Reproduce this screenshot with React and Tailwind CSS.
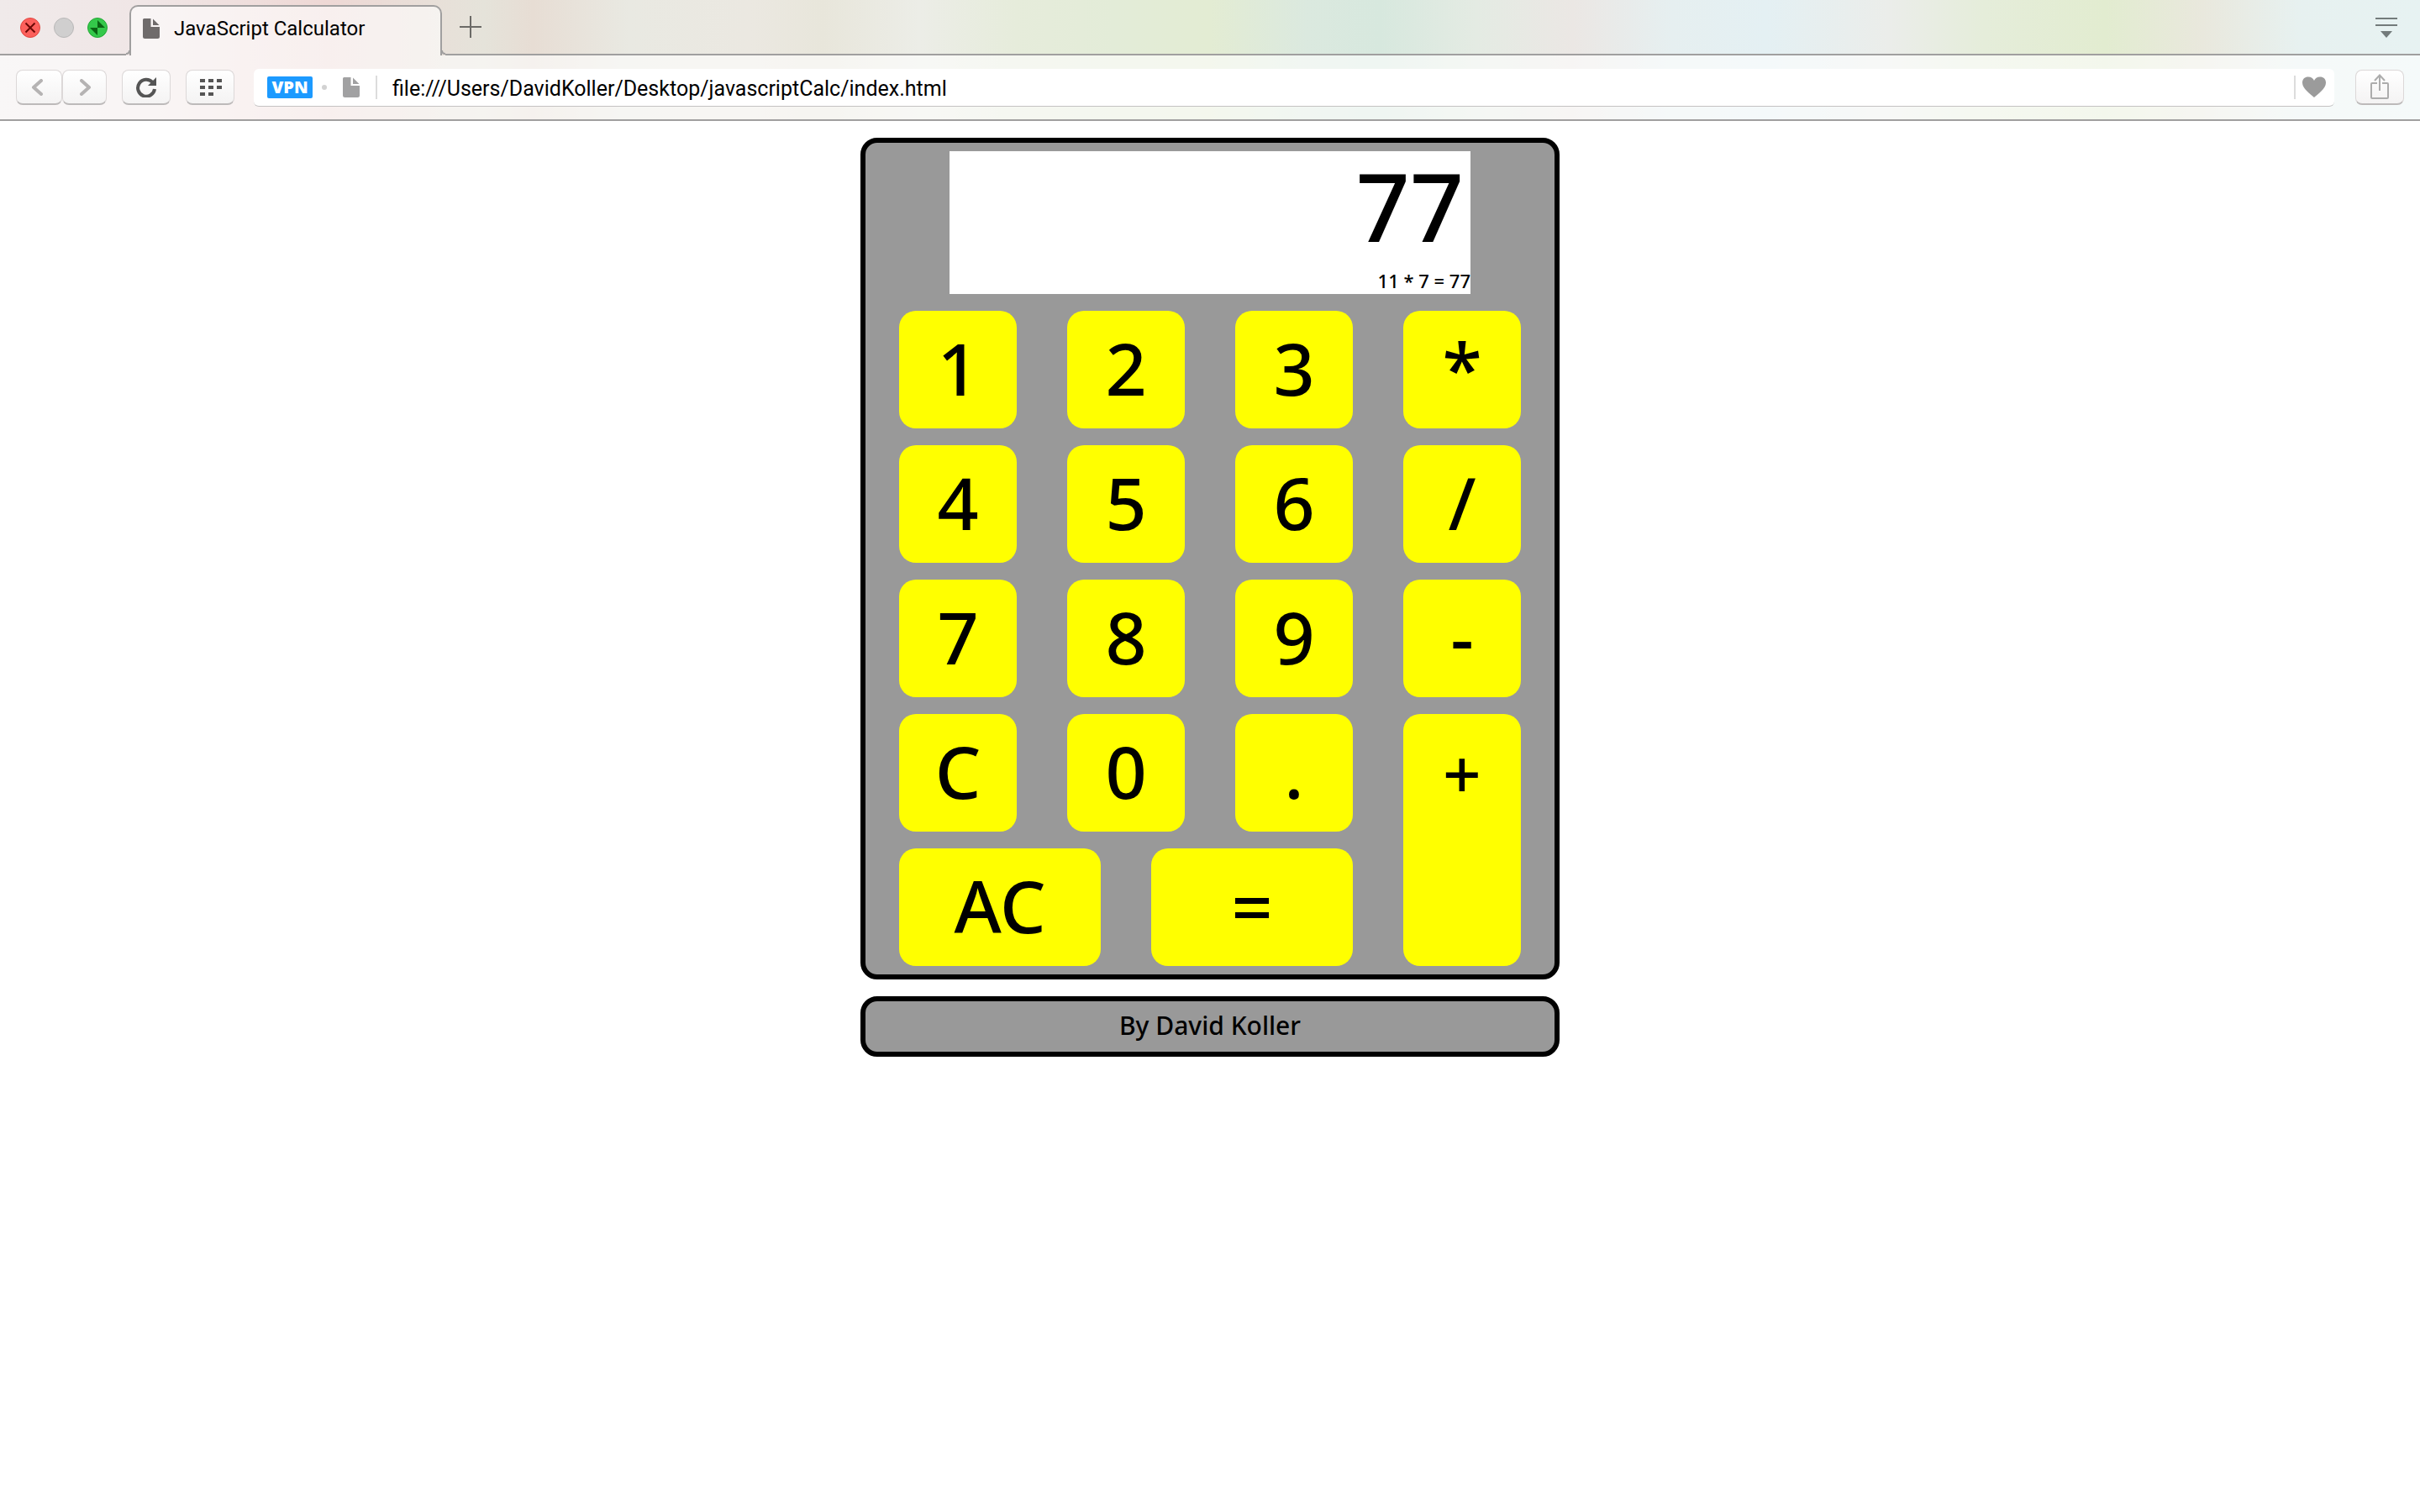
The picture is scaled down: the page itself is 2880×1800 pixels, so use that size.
const keyBase =
  "flex h-[140px] items-center justify-center rounded-[20px] bg-[#ffff00] pb-1 text-[86px] leading-none font-medium text-black";
const toolButton =
  "flex h-[42px] items-center justify-center rounded-lg border border-[#dcd8d8] border-b-2 border-b-[#bdbaba] bg-linear-to-b from-white to-[#f4f3f3]";

function PageIcon({ fill }) {
  return (
    <svg className="h-[26px] w-[22px] shrink-0" viewBox="0 0 22 26" fill={fill} aria-hidden="true">
      <path d="M2.500 1H10.500v10H21V22.500a2.500 2.500 0 0 1-2.500 2.500H3.500A2.500 2.500 0 0 1 1 22.500V2.500A1.500 1.500 0 0 1 2.500 1Z" />
      <path d="M13 1.500l7.500 7.500H13Z" />
    </svg>
  );
}

function TabFoot({ side }) {
  return (
    <svg className="h-[6px] w-[5px] shrink-0" viewBox="0 0 5 6" fill="none" stroke="#a09f9f" strokeWidth="2" aria-hidden="true">
      {side === "left" ? <path d="M0 4Q4 4 4 0" /> : <path d="M5 4Q1 4 1 0" />}
    </svg>
  );
}

function TabStrip() {
  return (
    <div className="flex h-[66px] items-end">
      <div className="flex h-[66px] w-[150px] shrink-0 items-center gap-4 border-b-2 border-[#a09f9f] pt-[2px] pl-6">
        <button aria-label="Close" className="size-6 rounded-full border border-[#e2463f] bg-[#fc605c]">
          <svg viewBox="0 0 22 22" stroke="#6b0906" strokeWidth="2" aria-hidden="true">
            <path d="M5.500 5.500l11 11M16.500 5.500l-11 11" />
          </svg>
        </button>
        <button aria-label="Minimize" className="size-6 rounded-full border border-[#b9b8b8] bg-[#d0cfcf]" />
        <button aria-label="Zoom" className="size-6 rounded-full border border-[#24a835] bg-[#34c84a]">
          <svg viewBox="0 0 22 22" fill="#0a6413" aria-hidden="true">
            <path d="M11 2v9h9ZM2 11h9v9Z" />
          </svg>
        </button>
      </div>
      <TabFoot side="left" />
      <div className="-mx-px flex h-[60px] w-[372px] shrink-0 items-center gap-4 rounded-t-[10px] border-x-2 border-t-2 border-[#a09f9f] bg-white/60 pb-[6px] pl-[13px]">
        <PageIcon fill="#6f6b6b" />
        <span className="font-['Roboto',sans-serif] text-[24px] leading-none text-black">JavaScript Calculator</span>
      </div>
      <TabFoot side="right" />
      <div className="flex h-[66px] flex-1 items-center justify-between border-b-2 border-[#a09f9f] pr-[26px] pl-[17px]">
        <button aria-label="New tab">
          <svg className="size-[26px]" viewBox="0 0 26 26" stroke="#6b6a66" strokeWidth="2" aria-hidden="true">
            <path d="M13 0v26M0 13h26" />
          </svg>
        </button>
        <button aria-label="Tab menu" className="pt-[2px]">
          <svg className="h-[26px] w-[28px]" viewBox="0 0 28 26" fill="#737b7b" aria-hidden="true">
            <path d="M1 1h26v2H1ZM1 9h26v2H1ZM7 17h14l-7 8Z" />
          </svg>
        </button>
      </div>
    </div>
  );
}

function Toolbar() {
  return (
    <div className="flex h-[78px] items-center border-b-2 border-[#a09f9f] bg-white/60 pr-[19px] pl-[19px]">
      <button aria-label="Back" className={`${toolButton} w-[55px] pr-1`}>
        <svg className="size-5" viewBox="0 0 20 20" fill="none" stroke="#b5b3b3" strokeWidth="4" strokeLinecap="round" strokeLinejoin="round" aria-hidden="true">
          <path d="M14 2L5 10l9 8" />
        </svg>
      </button>
      <button aria-label="Forward" className={`${toolButton} w-[53px]`}>
        <svg className="size-5" viewBox="0 0 20 20" fill="none" stroke="#b5b3b3" strokeWidth="4" strokeLinecap="round" strokeLinejoin="round" aria-hidden="true">
          <path d="M6 2l9 8-9 8" />
        </svg>
      </button>
      <button aria-label="Reload" className={`${toolButton} ml-[18px] w-[58px]`}>
        <svg className="h-6 w-[26px]" viewBox="0 0 26 24" aria-hidden="true">
          <path d="M20.500 6A10 10 0 1 0 23 14" fill="none" stroke="#555" strokeWidth="4" />
          <path d="M25 0v10H15Z" fill="#555" />
        </svg>
      </button>
      <button aria-label="Speed dial" className={`${toolButton} ml-[18px] w-[58px] pl-[2px]`}>
        <svg className="h-5 w-[26px]" viewBox="0 0 26 20" fill="#555" aria-hidden="true">
          <path d="M0 0h6v4H0ZM10 0h6v4h-6ZM20 0h6v4h-6ZM0 8h6v4H0ZM10 8h6v4h-6ZM20 8h6v4h-6ZM0 16h6v4H0ZM10 16h6v4h-6Z" />
        </svg>
      </button>
      <div className="ml-[23px] flex h-[45px] min-w-0 flex-1 items-center rounded-md border-b border-[#c4c2c2] bg-white pr-[9px] pl-4">
        <span className="flex h-[26px] w-[54px] items-center justify-center rounded-xs bg-[#1c9aff] font-['Open_Sans',sans-serif] text-[20px] leading-none font-extrabold text-white">
          VPN
        </span>
        <span className="ml-[11px] size-[6px] rounded-full bg-[#d2d2d2]" />
        <span className="ml-[18px] flex">
          <PageIcon fill="#a1a1a2" />
        </span>
        <span className="ml-[18px] h-7 w-[2px] bg-[#dcdcdc]" />
        <input
          aria-label="Address"
          defaultValue="file:///Users/DavidKoller/Desktop/javascriptCalc/index.html"
          className="ml-[18px] h-10 min-w-0 flex-1 bg-transparent pt-1 font-['Roboto',sans-serif] text-[25px] leading-9 text-black outline-none"
        />
        <span className="h-7 w-[2px] bg-[#dcdcdc]" />
        <button aria-label="Bookmark" className="mr-px ml-2">
          <svg className="h-[25px] w-[28px]" viewBox="0 0 28 25" fill="#9b9b9b" aria-hidden="true">
            <path d="M14 25C10 21 0 15 0 7.500C0 3 3 .5 7 .5C10.500 .5 13 2.500 14 5C15 2.500 17.500 .5 21 .5C25 .5 28 3 28 7.500C28 15 18 21 14 25Z" />
          </svg>
        </button>
      </div>
      <button aria-label="Share" className={`${toolButton} ml-[25px] w-[58px]`}>
        <svg className="h-[31px] w-6" viewBox="0 0 24 31" fill="none" stroke="#acacac" strokeWidth="2" aria-hidden="true">
          <path d="M9 11H3a1 1 0 0 0-1 1v16a1 1 0 0 0 1 1h18a1 1 0 0 0 1-1V12a1 1 0 0 0-1-1h-6M12 20V2M6 8l6-6.500L18 8" />
        </svg>
      </button>
    </div>
  );
}

function Key({ children }) {
  return (
    <button className={keyBase}>
      {children}
    </button>
  );
}

export default function App() {
  return (
    <div className="min-h-screen bg-white">
      <header className="bg-[linear-gradient(to_right,#f0eaea_0%,#f0e6e6_6%,#eed8d5_13.500%,#e5e3da_20%,#e7ddd4_22%,#e9e9e2_26%,#ebe8e1_31%,#e8e6db_34%,#ecede7_38%,#e6ecdb_42%,#e3ecd8_46%,#e3ecd3_50%,#dbe9df_54%,#d7e8de_57%,#e4ebe3_61%,#ebe7e4_65%,#e6eff0_69%,#e4f0f3_73%,#ebedea_78%,#e5edda_82%,#e2ecd0_87%,#e9e8dd_91%,#e7f1f0_95%,#e7f2f2_100%)]">
        <TabStrip />
        <Toolbar />
      </header>
      <main className="mx-auto flex w-full max-w-[832px] flex-col gap-5 pt-5 font-['Noto_Sans','Open_Sans',sans-serif]">
        <section aria-label="Calculator" className="flex flex-col gap-5 rounded-[20px] border-6 border-black bg-[#999999] px-10 py-[10px]">
          <output className="mx-[60px] flex h-[170px] flex-col items-end justify-between bg-white text-black">
            <span className="pr-2 text-[112px] leading-[130px] font-medium">77</span>
            <span className="text-[22px] leading-8 font-medium">11 * 7 = 77</span>
          </output>
          <div className="grid grid-cols-4 gap-x-[60px] gap-y-5">
            <Key>1</Key>
            <Key>2</Key>
            <Key>3</Key>
            <Key>*</Key>
            <Key>4</Key>
            <Key>5</Key>
            <Key>6</Key>
            <Key>/</Key>
            <Key>7</Key>
            <Key>8</Key>
            <Key>9</Key>
            <Key>-</Key>
            <Key>C</Key>
            <Key>0</Key>
            <Key>.</Key>
            <button className="row-span-2 flex items-start justify-center rounded-[20px] bg-[#ffff00] text-[80px] leading-[140px] font-medium text-black">
              +
            </button>
            <div className="col-span-3 grid grid-cols-2 gap-x-[60px]">
              <Key>AC</Key>
              <Key>=</Key>
            </div>
          </div>
        </section>
        <footer className="flex h-[72px] items-center justify-center rounded-[20px] border-6 border-black bg-[#999999] pb-[2px] text-[30px] leading-none font-medium text-black">
          By David Koller
        </footer>
      </main>
    </div>
  );
}
